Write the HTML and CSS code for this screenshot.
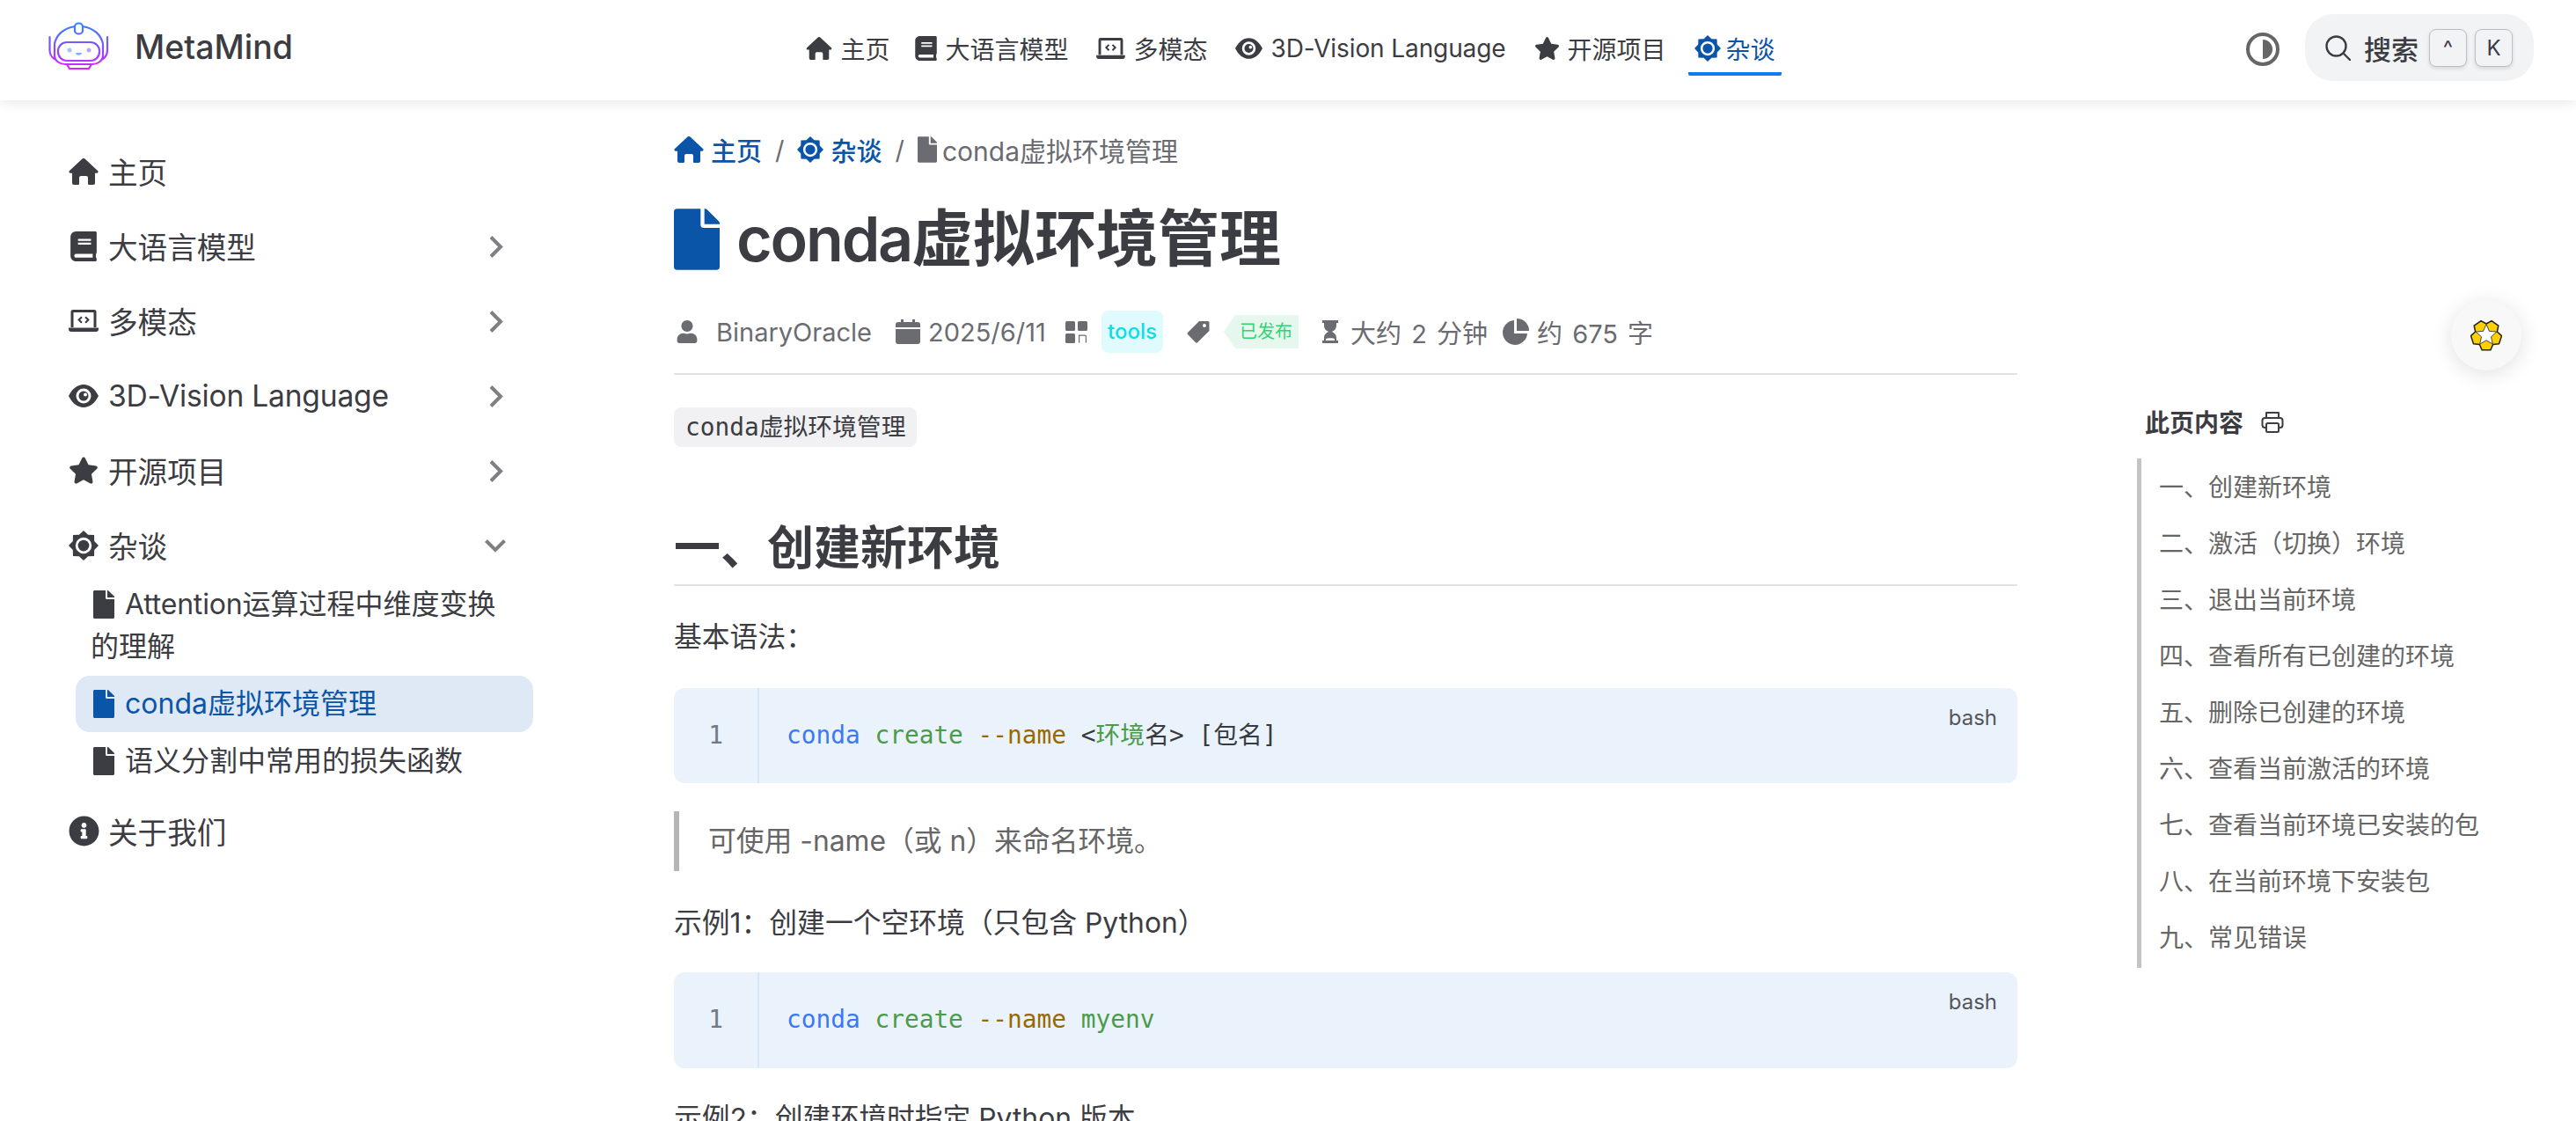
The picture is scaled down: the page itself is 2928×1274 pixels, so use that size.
FILE: index.html
```html
<!DOCTYPE html>
<html lang="zh-CN">
<head>
<meta charset="utf-8">
<title>conda虚拟环境管理 | MetaMind</title>
<link rel="stylesheet" href="styles.css">
</head>
<body>
<svg class="defs" aria-hidden="true">
  <defs>
    <linearGradient id="logo-grad" gradientUnits="userSpaceOnUse" x1="0" y1="0" x2="0" y2="56">
      <stop offset="0" stop-color="#2f86ff"/><stop offset="0.5" stop-color="#7d52ff"/><stop offset="1" stop-color="#ea1cff"/>
    </linearGradient>
  </defs>
  <symbol id="home" viewBox="0 0 34 30"><path d="M15.5.6a2.2 2.2 0 0 1 3 0L33 14a1.6 1.6 0 0 1-1 2.8h-2V28a2 2 0 0 1-2 2h-5a1 1 0 0 1-1-1v-7a2 2 0 0 0-2-2h-6a2 2 0 0 0-2 2v7a1 1 0 0 1-1 1H6a2 2 0 0 1-2-2V16.8H2A1.6 1.6 0 0 1 1 14z"/></symbol>
  <symbol id="book" viewBox="0 0 448 512"><path d="M448 360V24c0-13.3-10.7-24-24-24H96C43 0 0 43 0 96v320c0 53 43 96 96 96h328c13.3 0 24-10.7 24-24v-16c0-7.5-3.5-14.3-8.9-18.7-4.2-15.4-4.2-59.3 0-74.7 5.4-4.3 8.9-11.1 8.9-18.6zM128 134c0-3.3 2.7-6 6-6h212c3.3 0 6 2.7 6 6v20c0 3.3-2.7 6-6 6H134c-3.3 0-6-2.7-6-6v-20zm0 64c0-3.3 2.7-6 6-6h212c3.3 0 6 2.7 6 6v20c0 3.3-2.7 6-6 6H134c-3.3 0-6-2.7-6-6v-20zm253.4 250H96c-17.7 0-32-14.3-32-32 0-17.6 14.4-32 32-32h285.4c-1.9 17.1-1.9 46.9 0 64z"/></symbol>
  <symbol id="laptop" viewBox="0 0 34 25"><path fill-rule="evenodd" d="M5 0h24a2.5 2.5 0 0 1 2.5 2.5V20h-3V3h-23v17h-3V2.500A2.500 2.500 0 0 1 5 0zM0 20.500h34V22a3 3 0 0 1-3 3H3a3 3 0 0 1-3-3zM14.200 7.500l1.500 1.400-2.600 2.600 2.600 2.600-1.500 1.400-4-4zM19.800 7.500l4 4-4 4-1.500-1.400 2.600-2.600-2.600-2.600z"/></symbol>
  <symbol id="eye" viewBox="0 0 34 26"><path fill-rule="evenodd" d="M0 13C4 5 10 0 17 0s13 5 17 13c-4 8-10 13-17 13S4 21 0 13zM17 4.500a8.500 8.500 0 1 0 0 17 8.500 8.500 0 0 0 0-17z"/><path fill-rule="evenodd" d="M17 7.500a5.500 5.500 0 1 1 0 11 5.500 5.500 0 0 1 0-11zM19 9.500a2 2 0 1 0 0 4 2 2 0 0 0 0-4z"/></symbol>
  <symbol id="star" viewBox="0 0 576 512"><path d="M259.300 17.800L194 150.200 47.900 171.500c-26.200 3.800-36.700 36.100-17.700 54.600l105.700 103-25 145.500c-4.500 26.300 23.200 46 46.400 33.700L288 439.600l130.700 68.700c23.200 12.200 50.900-7.400 46.400-33.700l-25-145.500 105.700-103c19-18.500 8.500-50.800-17.700-54.600L382 150.200 316.700 17.800c-11.700-23.600-45.600-23.900-57.400 0z"/></symbol>
  <symbol id="gear" viewBox="0 0 24 24"><path fill-rule="evenodd" d="M12 0l3.560 3.400 4.930.11.110 4.930L24 12l-3.400 3.560-.11 4.930-4.930.11L12 24l-3.560-3.400-4.930-.11-.11-4.930L0 12l3.400-3.560.11-4.930 4.930-.11zM12 5.500a6.500 6.500 0 1 0 0 13 6.500 6.500 0 0 0 0-13z"/><circle cx="12" cy="12" r="4.500"/></symbol>
  <symbol id="file" viewBox="0 0 384 512"><path d="M224 136V0H24C10.700 0 0 10.700 0 24v464c0 13.300 10.700 24 24 24h336c13.300 0 24-10.700 24-24V160H248c-13.200 0-24-10.800-24-24zm160-14.100v6.100H256V0h6.100c6.400 0 12.500 2.500 17 7l97.900 98c4.500 4.500 7 10.600 7 16.900z"/></symbol>
  <symbol id="info" viewBox="0 0 512 512"><path d="M256 8C119 8 8 119.100 8 256c0 137 111 248 248 248s248-111 248-248C504 119.100 393 8 256 8zm0 110c23.200 0 42 18.800 42 42s-18.800 42-42 42-42-18.800-42-42 18.800-42 42-42zm56 254c0 6.600-5.400 12-12 12h-88c-6.600 0-12-5.400-12-12v-24c0-6.600 5.400-12 12-12h12v-64h-12c-6.600 0-12-5.400-12-12v-24c0-6.600 5.400-12 12-12h64c6.600 0 12 5.400 12 12v100h12c6.600 0 12 5.400 12 12v24z"/></symbol>
  <symbol id="user" viewBox="0 0 448 512"><path d="M224 256c70.700 0 128-57.300 128-128S294.700 0 224 0 96 57.300 96 128s57.300 128 128 128zm89.600 32h-16.700c-22.200 10.200-46.900 16-72.900 16s-50.600-5.800-72.900-16h-16.700C60.200 288 0 348.200 0 422.400V464c0 26.500 21.500 48 48 48h352c26.500 0 48-21.500 48-48v-41.600c0-74.200-60.200-134.400-134.400-134.400z"/></symbol>
  <symbol id="calendar" viewBox="0 0 28 28"><path d="M6 0h3v3h10V0h3v3h3a3 3 0 0 1 3 3v3H0V6a3 3 0 0 1 3-3h3zM0 11h28v14a3 3 0 0 1-3 3H3a3 3 0 0 1-3-3z"/></symbol>
  <symbol id="grid" viewBox="0 0 25 25"><rect width="11" height="11" rx="1.500"/><rect x="14" width="11" height="11" rx="1.500"/><rect y="14" width="11" height="11" rx="1.500"/><path d="M15 24.500V15.500h7a2 2 0 0 1 2 2v7h-1.200v-7a.8.8 0 0 0-.8-.8h-5.800v8z"/></symbol>
  <symbol id="tag" viewBox="0 0 26 26"><path fill-rule="evenodd" d="M14 1h10a1.500 1.500 0 0 1 1.500 1.500v9.500L12 25.300a1.500 1.500 0 0 1-2 0L1 16a1.500 1.500 0 0 1 0-2zM20 4a2 2 0 1 0 0 4 2 2 0 0 0 0-4z"/></symbol>
  <symbol id="glass" viewBox="0 0 18 26"><path fill-rule="evenodd" d="M0 0h18v3h-2v3c0 4-3 6-5 7 2 1 5 3 5 7v3h2v3H0v-3h2v-3c0-4 3-6 5-7-2-1-5-3-5-7V3H0zM4 21v2h10v-2c-1-1-8-1-10 0z"/></symbol>
  <symbol id="pie" viewBox="0 0 31 31"><path d="M14 2v15h15A14 14 0 1 1 14 2z"/><path d="M17 0a14 14 0 0 1 14 14H17z"/></symbol>
</svg>

<header class="navbar">
  <a class="brand">
    <svg class="logo" viewBox="0 0 72 56">
      <rect x="31" y="1.500" width="9" height="12" rx="4"/>
      <path d="M8 25C10 14 19 7 31 5M40 5C52 7 61 14 63 25"/>
      <rect x="12" y="23" width="47" height="21" rx="10"/>
      <path d="M2.500 17V32C2.500 38 5 40 8 42M68 17V32C68 38 66 40 63 42M8 26V38C8 44 14 48 20 48H51C57 48 63 44 63 38V26"/>
      <path d="M22 48L25 53H47L50 48"/>
      <path class="logo-mouth" d="M32 35H39C39 38.500 32 38.500 32 35z"/>
      <circle class="logo-eye-l" cx="25" cy="32" r="2.500"/><circle class="logo-eye-r" cx="47" cy="32" r="2.500"/>
    </svg>
    <span class="brand-name">MetaMind</span>
  </a>
  <nav class="topnav">
    <a class="topnav-item nav-home"><svg class="ic-home-n"><use href="#home"/></svg>主页</a>
    <a class="topnav-item"><svg class="ic-book-n"><use href="#book"/></svg>大语言模型</a>
    <a class="topnav-item"><svg class="ic-laptop-n"><use href="#laptop"/></svg>多模态</a>
    <a class="topnav-item"><svg class="ic-eye-n"><use href="#eye"/></svg><span class="latin-nav">3D-Vision Language</span></a>
    <a class="topnav-item"><svg class="ic-star-n"><use href="#star"/></svg>开源项目</a>
    <a class="topnav-item is-active"><svg class="ic-gear-n"><use href="#gear"/></svg>杂谈</a>
  </nav>
  <div class="tools">
    <svg class="toggle" viewBox="0 0 38 38"><circle class="toggle-ring" cx="19" cy="19" r="17"/><path d="M19 8a11 11 0 0 1 0 22z"/></svg>
    <div class="search">
      <svg class="search-ic" viewBox="0 0 29 29"><circle cx="12.500" cy="12.500" r="11"/><path d="M21 21l7 7"/></svg>
      <span class="search-label">搜索</span>
      <span class="keys"><kbd class="key">^</kbd><kbd class="key">K</kbd></span>
    </div>
  </div>
</header>

<main class="page">
  <aside class="sidebar">
    <a class="side-row"><span class="side-ic"><svg class="s-home"><use href="#home"/></svg></span>主页</a>
    <a class="side-row"><span class="side-ic"><svg class="s-book"><use href="#book"/></svg></span>大语言模型<svg class="chev" viewBox="0 0 17 27"><path d="M3 2.500L14 13.500 3 24.500"/></svg></a>
    <a class="side-row"><span class="side-ic"><svg class="s-laptop"><use href="#laptop"/></svg></span>多模态<svg class="chev" viewBox="0 0 17 27"><path d="M3 2.500L14 13.500 3 24.500"/></svg></a>
    <a class="side-row"><span class="side-ic"><svg class="s-eye"><use href="#eye"/></svg></span><span class="latin-tight">3D-Vision Language</span><svg class="chev" viewBox="0 0 17 27"><path d="M3 2.500L14 13.500 3 24.500"/></svg></a>
    <a class="side-row"><span class="side-ic"><svg class="s-star"><use href="#star"/></svg></span>开源项目<svg class="chev" viewBox="0 0 17 27"><path d="M3 2.500L14 13.500 3 24.500"/></svg></a>
    <a class="side-row"><span class="side-ic"><svg class="s-gear"><use href="#gear"/></svg></span>杂谈<svg class="chev-down" viewBox="0 0 26 16"><path d="M2.500 2.500L13 13 23.500 2.500"/></svg></a>
    <ul class="side-sub">
      <li><a class="sub-link"><svg class="s-file"><use href="#file"/></svg><span class="latin-tight">Attention</span>运算过程中维度变换的理解</a></li>
      <li><a class="sub-link is-active"><svg class="s-file"><use href="#file"/></svg>conda虚拟环境管理</a></li>
      <li><a class="sub-link"><svg class="s-file"><use href="#file"/></svg>语义分割中常用的损失函数</a></li>
    </ul>
    <a class="side-row side-last"><span class="side-ic"><svg class="s-info"><use href="#info"/></svg></span>关于我们</a>
  </aside>

  <article class="content">
    <div class="crumbs">
      <a class="crumb-link"><svg class="c-home"><use href="#home"/></svg>主页</a>
      <span class="crumb-sep">/</span>
      <a class="crumb-link"><svg class="c-gear"><use href="#gear"/></svg>杂谈</a>
      <span class="crumb-sep">/</span>
      <span class="crumb-cur"><svg class="c-file"><use href="#file"/></svg>conda虚拟环境管理</span>
    </div>
    <h1 class="title"><svg class="t-file"><use href="#file"/></svg><span><span class="title-latin">conda</span>虚拟环境管理</span></h1>
    <div class="meta">
      <span class="meta-item m-author"><svg class="m-user"><use href="#user"/></svg>BinaryOracle</span>
      <span class="meta-item m-date"><svg class="m-cal"><use href="#calendar"/></svg>2025/6/11</span>
      <span class="meta-item m-cat"><svg class="m-grid"><use href="#grid"/></svg><span class="pill">tools</span></span>
      <span class="meta-item m-tags"><svg class="m-tag"><use href="#tag"/></svg><span class="badge">已发布</span></span>
      <span class="meta-item m-time"><svg class="m-glass"><use href="#glass"/></svg>大约 2 分钟</span>
      <span class="meta-item m-words"><svg class="m-pie"><use href="#pie"/></svg>约 675 字</span>
    </div>
    <p class="lead"><code class="inline-code">conda虚拟环境管理</code></p>
    <h2 class="heading">一、创建新环境</h2>
    <p class="para p-first">基本语法&#xFF1A;</p>
    <div class="code">
      <span class="lineno">1</span>
      <pre class="code-body"><span class="t-blue">conda</span> <span class="t-green">create</span> <span class="t-brown">--name</span> &lt;<span class="t-green">环境</span>名&gt; [包名]</pre>
      <span class="code-lang">bash</span>
    </div>
    <blockquote class="quote">可使用 -name&#xFF08;或 n&#xFF09;来命名环境。</blockquote>
    <p class="para p-ex">示例1&#xFF1A;创建一个空环境&#xFF08;只包含 Python&#xFF09;</p>
    <div class="code code-2">
      <span class="lineno">1</span>
      <pre class="code-body"><span class="t-blue">conda</span> <span class="t-green">create</span> <span class="t-brown">--name</span> <span class="t-green">myenv</span></pre>
      <span class="code-lang">bash</span>
    </div>
    <p class="para p-ex2">示例2&#xFF1A;创建环境时指定 Python 版本</p>
  </article>

  <aside class="toc">
    <div class="toc-title">此页内容<svg class="print" viewBox="0 0 26 26"><path d="M6 8V2h14v6"/><rect x="1.500" y="8" width="23" height="11" rx="3"/><rect class="print-sheet" x="6" y="14" width="14" height="10" rx="1.500"/></svg></div>
    <ul class="toc-list">
      <li>一、创建新环境</li>
      <li>二、激活&#xFF08;切换&#xFF09;环境</li>
      <li>三、退出当前环境</li>
      <li>四、查看所有已创建的环境</li>
      <li>五、删除已创建的环境</li>
      <li>六、查看当前激活的环境</li>
      <li>七、查看当前环境已安装的包</li>
      <li>八、在当前环境下安装包</li>
      <li>九、常见错误</li>
    </ul>
  </aside>
</main>

<button class="fab" type="button" aria-label="theme">
  <svg class="fab-ic" viewBox="0 0 36 36"><path class="fab-outer" d="M18 5L23.990 1.550 31.790 7.220 30.360 13.980 35.490 18.610 32.510 27.790 25.640 28.520 22.830 34.820H13.170L10.360 28.520 3.490 27.790.51 18.610 5.640 13.980 4.210 7.220 12.010 1.550z"/><path class="fab-inner" d="M18 5.500L21.410 13.310 29.890 14.140 23.520 19.790 25.350 28.110 18 23.800 10.650 28.110 12.480 19.790 6.110 14.140 14.590 13.310z"/></svg>
</button>
</body>
</html>
```
FILE: styles.css
```css
* { box-sizing: border-box; }
html, body { margin: 0; height: 100vh; overflow: hidden; background: #fff; }
body {
  font-family: Inter, "Noto Sans CJK SC", sans-serif;
  font-size: 28px;
  color: #3c3c43;
  position: relative;
}
svg { fill: currentColor; flex: none; }
.defs { position: absolute; width: 0; height: 0; }
a { color: inherit; text-decoration: none; }
ul { list-style: none; margin: 0; padding: 0; }
.latin-tight { letter-spacing: -.2px; }
.latin-nav { letter-spacing: -.1px; }

/* navbar */
.navbar {
  height: 114px;
  display: grid;
  grid-template-columns: 1fr auto 1fr;
  align-items: center;
  padding: 0 48px 0 54px;
  background: #fff;
  box-shadow: 0 3px 14px rgba(0, 0, 0, .09);
  position: relative;
  z-index: 2;
}
.brand { display: flex; align-items: center; gap: 27px; margin-top: -8px; }
.logo { width: 72px; height: 56px; fill: none; stroke: url(#logo-grad); stroke-width: 2.2; stroke-linecap: round; stroke-linejoin: round; }
.logo-mouth { fill: #7fb0ff; stroke: none; }
.logo-eye-l { fill: #a7c2ff; stroke: none; }
.logo-eye-r { fill: #b9a7ff; stroke: none; }
.brand-name { font-size: 37.5px; font-weight: 500; }
.topnav { display: flex; gap: 18px; align-self: start; }
.topnav-item {
  display: flex;
  align-items: center;
  gap: 9px;
  height: 86px;
  padding: 44px 7px 17px;
  font-size: 28px;
  border-bottom: 4px solid transparent;
  border-radius: 0 0 2px 2px;
  white-space: nowrap;
}
.topnav-item.nav-home { gap: 9px; padding-right: 4px; }
.topnav-item.is-active { color: #0b55a9; border-bottom-color: #0d7cf0; gap: 6px; }
.ic-home-n { width: 30px; height: 26px; }
.ic-book-n { width: 25px; height: 28px; }
.ic-laptop-n { width: 33px; height: 24px; }
.ic-eye-n { width: 31px; height: 24px; }
.ic-star-n { width: 29px; height: 26px; }
.ic-gear-n { width: 30px; height: 30px; }
.tools { display: flex; align-items: center; justify-content: flex-end; gap: 29px; margin-top: -6px; }
.toggle { width: 38px; height: 38px; color: #666; margin-top: 4px; }
.toggle-ring { fill: none; stroke: currentColor; stroke-width: 4; }
.search {
  display: flex;
  align-items: center;
  width: 260px;
  height: 76px;
  padding: 0 23px;
  background: #f2f3f5;
  border-radius: 32px;
}
.search-ic { width: 29px; height: 29px; fill: none; stroke: currentColor; stroke-width: 2.4; stroke-linecap: round; }
.search-label { font-size: 31px; font-weight: 500; margin-left: 15px; }
.keys { display: flex; gap: 9px; margin-left: 12px; }
.key {
  display: flex;
  align-items: center;
  justify-content: center;
  width: 43px;
  height: 43px;
  font: 400 24px Inter, sans-serif;
  background: #f2f3f5;
  border: 1.5px solid #bdbdc2;
  border-radius: 8px;
  box-shadow: 0 2px 4px rgba(0, 0, 0, .12);
}

/* layout */
.page {
  display: grid;
  grid-template-columns: 766px 1527px 1fr;
  align-items: start;
}

/* sidebar */
.sidebar { padding-top: 38px; font-size: 33.6px; }
.side-row {
  display: flex;
  align-items: center;
  height: 85px;
  padding: 0 190px 0 78px;
  white-space: nowrap;
}
.side-last { margin-top: 5.5px; }
.side-ic {
  display: flex;
  justify-content: center;
  align-items: center;
  width: 34px;
  margin-right: 11px;
}
.s-home { width: 34px; height: 30px; }
.s-book { width: 30px; height: 34px; }
.s-laptop { width: 34px; height: 25px; }
.s-eye { width: 34px; height: 26px; }
.s-star { width: 34px; height: 31px; }
.s-gear { width: 34px; height: 34px; }
.s-info { width: 35px; height: 35px; }
.chev { width: 17px; height: 27px; margin: 2px 4px 0 auto; }
.chev-down { width: 26px; height: 16px; margin-left: auto; }
.chev path, .chev-down path { fill: none; stroke: #808084; stroke-width: 4; }
.side-sub { margin: -7.5px 160px 0 86px; font-size: 32px; line-height: 48px; }
.sub-link {
  display: block;
  padding: 8px 22px 8px 17px;
  margin-bottom: 1px;
  border-radius: 16px;
}
.sub-link.is-active { background: #dfe8f5; color: #0b55a9; }
.s-file { width: 24px; height: 32px; margin: 0 12px 0 3px; vertical-align: -5px; }

/* content */
.content { padding-top: 36px; }
.crumbs { display: flex; align-items: center; height: 40px; font-size: 29px; }
.crumb-link { display: flex; align-items: center; color: #0b55a9; font-weight: 500; gap: 8px; }
.crumb-sep { margin: 0 15px; color: #6b6b72; }
.crumb-cur { display: flex; align-items: center; gap: 6px; color: #6b6b72; font-size: 30px; }
.c-home { width: 34px; height: 30px; }
.c-gear { width: 30px; height: 30px; }
.c-file { width: 22px; height: 30px; }
.title {
  display: flex;
  align-items: center;
  gap: 19px;
  height: 88px;
  margin: 38px 0 0;
  font-size: 70px;
  font-weight: 600;
  line-height: 88px;
}
.title-latin { letter-spacing: -2.2px; }
.t-file { width: 52px; height: 70px; color: #0b55a9; }
.meta {
  display: flex;
  align-items: center;
  margin-top: 37px;
  padding-bottom: 23px;
  box-sizing: content-box;
  height: 48px;
  border-bottom: 2px solid #e2e2e3;
  color: #6b6b72;
  font-size: 29px;
  white-space: nowrap;
}
.meta-item { display: flex; align-items: center; }
.m-author { width: 252px; padding-left: 3px; gap: 21px; }
.m-date { width: 193px; gap: 9px; }
.m-cat { width: 138px; gap: 16px; }
.m-tags { width: 154px; gap: 16px; }
.m-time { width: 204px; gap: 14px; word-spacing: 3px; }
.m-words { gap: 9px; word-spacing: 3px; }
.m-user { width: 24px; height: 26px; }
.m-cal { width: 28px; height: 28px; }
.m-grid { width: 25px; height: 25px; }
.m-tag { width: 26px; height: 26px; }
.m-glass { width: 18px; height: 26px; }
.m-pie { width: 31px; height: 31px; }
.pill {
  display: block;
  padding: 0 7px;
  height: 48px;
  line-height: 48px;
  font-size: 24px;
  font-weight: 500;
  color: #11dbe6;
  background: #e0fbfd;
  border-radius: 8px;
}
.badge {
  display: block;
  height: 38px;
  width: 85px;
  padding-left: 18px;
  line-height: 38px;
  font-size: 20px;
  color: #2ed573;
  background: #e6f8ee;
  clip-path: polygon(13px 0, 100% 0, 100% 100%, 13px 100%, 0 50%);
}
.lead { margin: 37px 0 0; line-height: 45px; height: 45px; }
.inline-code {
  display: inline-block;
  padding: 0 13px;
  height: 45px;
  font: 27.8px/45px "DejaVu Sans Mono", "Noto Sans CJK SC", monospace;
  background: #f1f1f3;
  border-radius: 8px;
}
.heading {
  margin: 78px 0 0;
  padding-bottom: 4px;
  font-size: 53px;
  font-weight: 600;
  line-height: 74px;
  border-bottom: 2px solid #e2e2e3;
}
.para { margin: 0; line-height: 48px; font-size: 31.8px; }
.p-first { margin-top: 34px; }
.p-ex { margin-top: 35px; }
.p-ex2 { margin-top: 33px; }
.code {
  display: flex;
  position: relative;
  height: 108px;
  margin-top: 34px;
  background: #eaf3fb;
  border-radius: 12px;
  font: 27.8px/108px "DejaVu Sans Mono", "Noto Sans CJK SC", monospace;
}
.code-2 { height: 109px; margin-top: 32px; }
.lineno {
  width: 97px;
  text-align: center;
  color: #6f7a86;
  border-right: 2px solid #d7e7f5;
}
.code-body { margin: 0 0 0 31px; font: inherit; color: #383a42; }
.code-lang {
  position: absolute;
  top: 20px;
  right: 23px;
  font: 24px/28px Inter, sans-serif;
  color: #55555c;
}
.t-blue { color: #3b78f5; }
.t-green { color: #4b9b4b; }
.t-brown { color: #996800; }
.quote {
  height: 68px;
  margin: 32px 0 0;
  padding-left: 33px;
  font-size: 31.8px;
  line-height: 68px;
  border-left: 6px solid #b5b5b8;
  color: #666;
}

/* toc */
.toc { margin: 341px 0 0 136px; }
.toc-title {
  display: flex;
  align-items: center;
  gap: 20px;
  height: 48px;
  padding-left: 9px;
  font-size: 28px;
  font-weight: 600;
}
.print { width: 26px; height: 26px; margin-top: 2px; fill: none; stroke: currentColor; stroke-width: 2; stroke-linejoin: round; }
.print-sheet { fill: #fff; }
.toc-list {
  margin-top: 18px;
  padding: 1px 0 2px 20px;
  border-left: 5px solid #c4c4c6;
  font-size: 28px;
  color: #666;
}
.toc-list li { height: 64px; line-height: 64px; white-space: nowrap; }

/* floating button */
.fab {
  position: absolute;
  top: 341px;
  left: 2786px;
  width: 80px;
  height: 80px;
  padding: 0;
  display: flex;
  align-items: center;
  justify-content: center;
  border: 0;
  border-radius: 50%;
  background: #f8f8f8;
  box-shadow: 0 4px 24px rgba(0, 0, 0, .12);
}
.fab-ic { width: 36px; height: 36px; }
.fab-outer { fill: #ffd000; stroke: #222; stroke-width: 1.5; stroke-linejoin: round; }
.fab-inner { fill: #fff; stroke: #333; stroke-width: .9; stroke-linejoin: round; }
```
